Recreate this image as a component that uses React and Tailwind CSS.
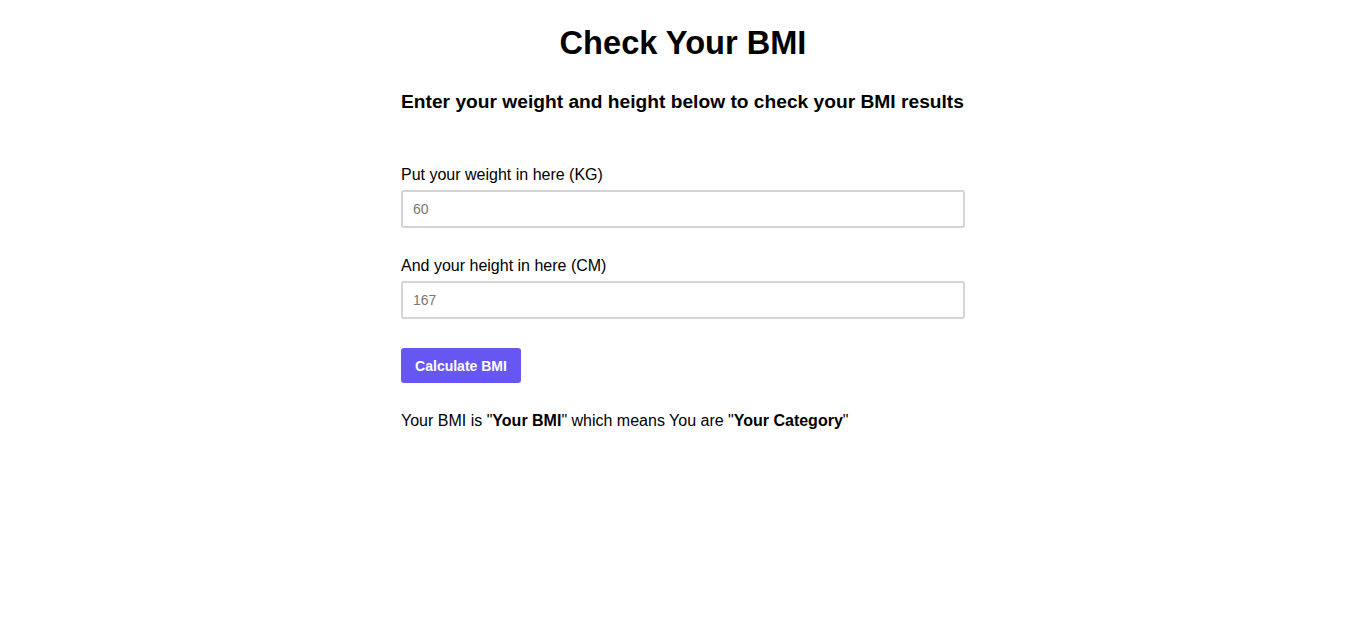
import React, { useState } from 'react';

const font = { fontFamily: '"Liberation Sans", Arial, sans-serif' };

export default function App() {
  const [weight, setWeight] = useState('');
  const [height, setHeight] = useState('');
  const [bmi, setBmi] = useState(null);
  const [category, setCategory] = useState(null);

  const calculate = () => {
    const w = parseFloat(weight);
    const h = parseFloat(height) / 100;
    if (!w || !h) return;
    const value = w / (h * h);
    setBmi(value.toFixed(1));
    if (value < 18.5) setCategory('Underweight');
    else if (value < 25) setCategory('Normal');
    else if (value < 30) setCategory('Overweight');
    else setCategory('Obese');
  };

  return (
    <div className="min-h-screen bg-white text-black" style={font}>
      <div className="w-[564px] mx-auto flex flex-col">
        <h1 className="mt-[24px] text-[32.6px] leading-[37px] font-bold text-center">Check Your BMI</h1>
        <h2 className="mt-[30px] text-[19.2px] leading-[22px] font-bold whitespace-nowrap">
          Enter your weight and height below to check your BMI results
        </h2>

        {/* Weight */}
        <label className="mt-[53px] text-base leading-[18px]">Put your weight in here (KG)</label>
        <input
          type="number"
          value={weight}
          onChange={(e) => setWeight(e.target.value)}
          placeholder="60"
          className="mt-[6px] h-[38px] w-full border-2 border-[#d4d4d4] rounded-[3px] px-[10px] text-sm placeholder-[#777] outline-none"
        />

        {/* Height */}
        <label className="mt-[29px] text-base leading-[18px]">And your height in here (CM)</label>
        <input
          type="number"
          value={height}
          onChange={(e) => setHeight(e.target.value)}
          placeholder="167"
          className="mt-[6px] h-[38px] w-full border-2 border-[#d4d4d4] rounded-[3px] px-[10px] text-sm placeholder-[#777] outline-none"
        />

        <button
          onClick={calculate}
          className="mt-[29px] w-[120px] h-[35px] rounded-[3px] bg-[#6657f3] text-white text-sm font-bold"
        >
          Calculate BMI
        </button>

        <p className="mt-[29px] text-base leading-[18px]">
          Your BMI is "<b>{bmi ?? 'Your BMI'}</b>" which means You are "<b>{category ?? 'Your Category'}</b>"
        </p>
      </div>
    </div>
  );
}
